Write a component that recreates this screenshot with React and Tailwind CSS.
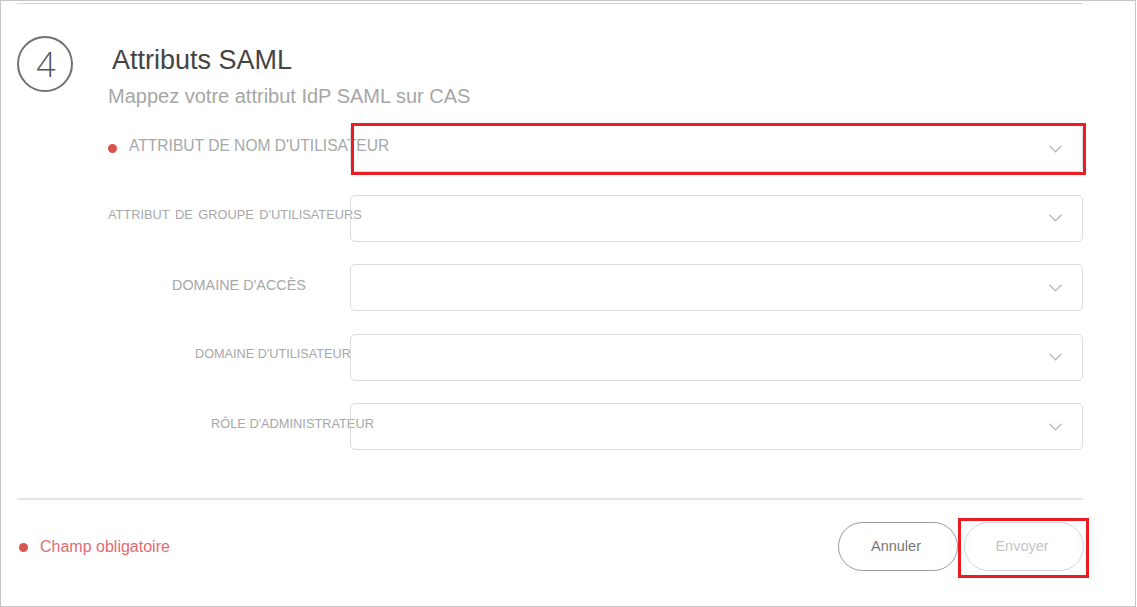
const FIELDS = [
  { label: "ATTRIBUT DE NOM D'UTILISATEUR", pl: 'pl-[107px]', size: 'text-[15.6px]', required: true },
  { label: "ATTRIBUT DE GROUPE D'UTILISATEURS", pl: 'pl-[107px]', size: 'text-[12.8px] [word-spacing:2px]' },
  { label: "DOMAINE D'ACCÈS", pl: 'pl-[171px]', size: 'text-[14.4px]' },
  { label: "DOMAINE D'UTILISATEUR", pl: 'pl-[194px]', size: 'text-[12.7px]' },
  { label: "RÔLE D'ADMINISTRATEUR", pl: 'pl-[210px]', size: 'text-[12.8px]' },
];

export default function App() {
  return (
    <div className="relative flex h-[607px] w-[1136px] flex-col border border-[#c6c6c6] bg-white font-['Liberation_Sans',Arial,sans-serif]">
      <div className="ml-[16px] mt-[2px] h-px w-[1066px] bg-[#d6d6d6]" />

      {/* step header */}
      <div className="ml-[16px] mt-[32px] flex items-start">
        <div className="flex h-[56px] w-[56px] flex-none items-center justify-center rounded-full border-2 border-[#6c7277]">
          <span className="ml-[2px] font-['Open_Sans',sans-serif] text-[34px] font-light leading-none text-[#555]">4</span>
        </div>
        <div className="ml-[39px] mt-[11px] flex flex-col">
          <h1 className="text-[27px] leading-none text-[#444]">Attributs SAML</h1>
          <p className="-ml-[4px] mt-[12px] text-[20px] leading-none text-[#a6a6a6]">Mappez votre attribut IdP SAML sur CAS</p>
        </div>
      </div>

      {/* fields */}
      <div className="mt-[19px] flex flex-col gap-[22.5px]">
        {FIELDS.map((f) => (
          <Row key={f.label} {...f} />
        ))}
      </div>

      <div className="ml-[16px] mt-[48px] h-[2px] w-[1066px] bg-[#e4e4e4]" />

      {/* footer */}
      <div className="ml-[17px] mt-[22px] flex w-[1066px] items-center justify-between">
        <div className="flex items-center">
          <span className="ml-px mt-[2px] h-[9px] w-[9px] rounded-full bg-[#d9534f]" />
          <span className="ml-[12px] text-[16px] text-[#e46a72]">Champ obligatoire</span>
        </div>
        <div className="flex gap-[6px]">
          <button className="h-[49px] w-[120px] rounded-full border border-[#9a9a9a] pr-[4px] text-[14.5px] text-[#777]">Annuler</button>
          <button className="h-[49px] w-[120px] rounded-full border border-[#d6d6d6] pr-[4px] text-[14.5px] text-[#c6c6c6]">Envoyer</button>
        </div>
      </div>

      {/* annotation boxes */}
      <div className="pointer-events-none absolute left-[350px] top-[122px] h-[52px] w-[735px] border-[3px] border-[#ec1c24]" />
      <div className="pointer-events-none absolute left-[957px] top-[517px] h-[60px] w-[131px] border-[3px] border-[#ec1c24]" />
    </div>
  );
}

function Row({ label, pl, size, required }) {
  return (
    <div className="flex h-[47px] items-center">
      <div className={`flex w-[349px] flex-none items-center whitespace-nowrap pb-[5px] ${pl}`}>
        {required && <span className="mr-[12px] mt-[4px] h-[9px] w-[9px] flex-none rounded-full bg-[#d9534f]" />}
        <span className={`leading-none text-[#a6a8aa] ${size}`}>{label}</span>
      </div>
      <div className="flex h-[47px] w-[733px] flex-none items-center justify-end rounded-[5px] border border-[#dcdcdc] pr-[20px]">
        <svg width="13" height="8" viewBox="0 0 13 8" fill="none">
          <polyline points="0.5,0.8 6.5,6.8 12.5,0.8" stroke="#b9b9b9" strokeWidth="1.3" />
        </svg>
      </div>
    </div>
  );
}
